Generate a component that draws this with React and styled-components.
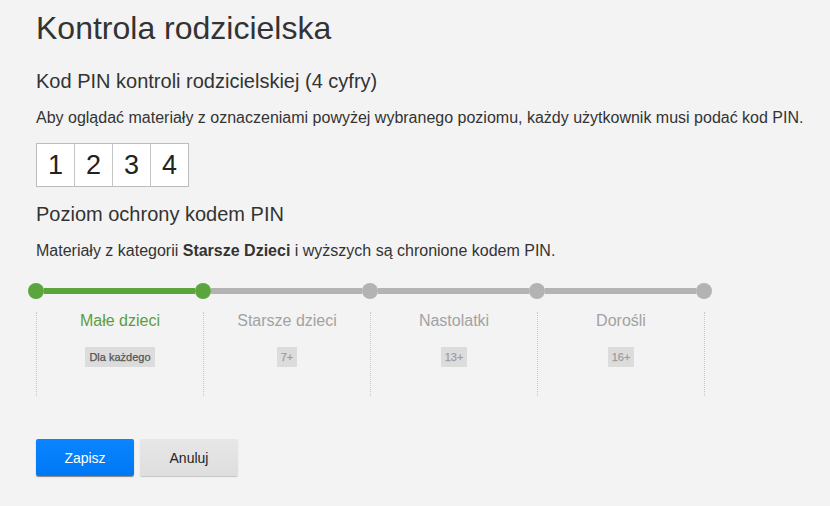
import React from 'react';
import styled, { createGlobalStyle } from 'styled-components';

const levels = [
  { name: 'Małe dzieci', badge: 'Dla każdego' },
  { name: 'Starsze dzieci', badge: '7+' },
  { name: 'Nastolatki', badge: '13+' },
  { name: 'Dorośli', badge: '16+' },
];

const activeIndex = 0;
const pin = ['1', '2', '3', '4'];

export default function App() {
  return (
    <>
      <GlobalStyle />
      <Page>
        <Title>Kontrola rodzicielska</Title>
        <Subtitle>Kod PIN kontroli rodzicielskiej (4 cyfry)</Subtitle>
        <Text>
          Aby oglądać materiały z oznaczeniami powyżej wybranego poziomu, każdy użytkownik musi podać kod PIN.
        </Text>
        <PinBox>
          {pin.map((d, i) => (
            <PinCell key={i}>{d}</PinCell>
          ))}
        </PinBox>
        <Subtitle $top={15}>Poziom ochrony kodem PIN</Subtitle>
        <Text>
          Materiały z kategorii <b>Starsze Dzieci</b> i wyższych są chronione kodem PIN.
        </Text>
        <Slider>
          <Dot $on />
          {levels.map((l, i) => (
            <React.Fragment key={i}>
              <Segment $on={i <= activeIndex} />
              <Dot $on={i <= activeIndex} />
            </React.Fragment>
          ))}
        </Slider>
        <Columns>
          {levels.map((l, i) => (
            <Column key={i}>
              <Label $on={i === activeIndex}>{l.name}</Label>
              <Badge $on={i === activeIndex}>{l.badge}</Badge>
            </Column>
          ))}
        </Columns>
        <Buttons>
          <Button $primary>Zapisz</Button>
          <Button>Anuluj</Button>
        </Buttons>
      </Page>
    </>
  );
}

/* eslint-disable */
const GlobalStyle = createGlobalStyle`
  html, body {
    margin: 0;
    padding: 0;
    background: #f3f3f3;
  }
  body {
    font-family: "Liberation Sans", Arial, sans-serif;
    color: #333;
  }
`;

const Page = styled.div`
  padding: 10px 0 0 36px;
  height: 506px;
  box-sizing: border-box;
`;

const Title = styled.h1`
  margin: 0;
  font-size: 32px;
  line-height: 37px;
  font-weight: normal;
  color: #333;
`;

const Subtitle = styled.h2`
  margin: ${p => p.$top || 22}px 0 0;
  font-size: 20px;
  line-height: 24px;
  font-weight: normal;
  color: #333;
`;

const Text = styled.p`
  margin: 15px 0 0;
  font-size: 16px;
  line-height: 20px;
  color: #333;
  b {
    font-weight: bold;
  }
`;

const PinBox = styled.div`
  display: flex;
  margin-top: 15px;
  width: max-content;
  border: 1px solid #bcbcbc;
  background: #fff;
`;

const PinCell = styled.div`
  width: 37px;
  height: 42px;
  display: flex;
  align-items: center;
  justify-content: center;
  font-size: 27px;
  color: #222;
  & + & {
    border-left: 1px solid #c4c4c4;
  }
`;

const Slider = styled.div`
  display: flex;
  align-items: center;
  margin: 22px 0 0 -8px;
  height: 16px;
`;

const Dot = styled.div`
  width: 16px;
  height: 16px;
  border-radius: 50%;
  flex: none;
  background: ${p => (p.$on ? '#5ba53d' : '#b3b3b3')};
`;

const Segment = styled.div`
  width: 151px;
  height: 6px;
  flex: none;
  background: ${p => (p.$on ? '#5ba53d' : '#b3b3b3')};
`;

const Columns = styled.div`
  display: flex;
  margin-top: 13px;
  width: max-content;
  border-right: 1px dotted #c8c8c8;
`;

const Column = styled.div`
  width: 166px;
  height: 84px;
  border-left: 1px dotted #c8c8c8;
  display: flex;
  flex-direction: column;
  align-items: center;
`;

const Label = styled.div`
  font-size: 16px;
  line-height: 17px;
  color: ${p => (p.$on ? '#5c9e3c' : '#a2a2a2')};
`;

const Badge = styled.div`
  margin-top: 18px;
  height: 20px;
  padding: 0 4px;
  line-height: 20px;
  font-size: 11px;
  font-weight: normal;
  -webkit-text-stroke: 0.25px currentColor;
  background: #dcdcdc;
  color: ${p => (p.$on ? '#555' : '#9c9c9c')};
`;

const Buttons = styled.div`
  display: flex;
  gap: 6px;
  margin-top: 43px;
`;

const Button = styled.button`
  width: 98px;
  height: 37px;
  border: none;
  border-radius: 2px;
  font-family: "Liberation Sans", Arial, sans-serif;
  font-size: 14px;
  cursor: pointer;
  color: ${p => (p.$primary ? '#fff' : '#222')};
  background: ${p =>
    p.$primary
      ? 'linear-gradient(#0a84ff, #0078f5)'
      : 'linear-gradient(#e7e7e7, #dedede)'};
  box-shadow: 0 1px 1px rgba(0, 0, 0, ${p => (p.$primary ? 0.45 : 0.2)});
`;
/* eslint-enable */
